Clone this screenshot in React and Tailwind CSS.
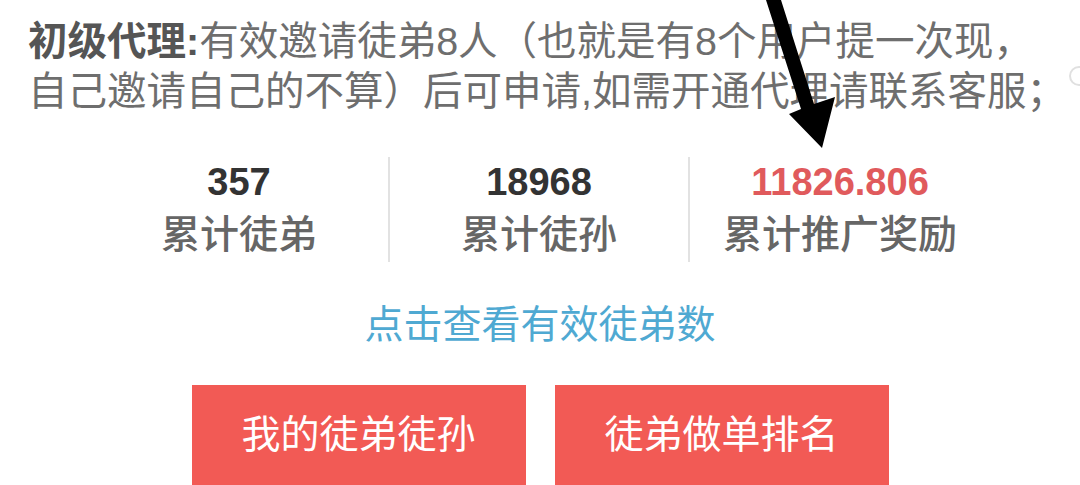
import React from "react"

const font = { fontFamily: '"Liberation Sans", "Noto Sans CJK SC", sans-serif' }

function Stat({ value, label, red, last }) {
  return (
    <div className={`flex w-[300px] flex-col items-center ${last ? "" : "border-r-2 border-[#e2e2e2]"}`}>
      <div className={`h-[50px] text-[38px] leading-[50px] font-bold ${red ? "text-[#e05a5c]" : "text-[#333333]"}`}>
        {value}
      </div>
      <div className="h-[55px] text-[39px] leading-[55px] font-medium text-[#666666]">{label}</div>
    </div>
  )
}

export default function App() {
  return (
    <div className="relative h-[485px] w-[1080px] overflow-hidden bg-white" style={font}>
      {/* intro text */}
      <div className="pl-[28px] pt-[16px] text-[39.5px] leading-[50px] text-[#6e6e6e] whitespace-nowrap">
        <span className="font-bold text-[#555555]">初级代理:</span>有效邀请徒弟8人（也就是有8个用户提一次现，
        <br />
        自己邀请自己的不算）后可申请,如需开通代理请联系客服；
      </div>

      {/* stats */}
      <div className="mt-[41px] flex justify-center">
        <Stat value="357" label="累计徒弟" />
        <Stat value="18968" label="累计徒孙" />
        <Stat value="11826.806" label="累计推广奖励" red last />
      </div>

      <div className="mt-[38px] text-center text-[39px] leading-[50px] text-[#4fa9d2]">点击查看有效徒弟数</div>

      {/* buttons */}
      <div className="mt-[35px] flex justify-center gap-[29px]">
        <button className="flex h-[100px] w-[334px] items-center justify-center bg-[#f25a55] text-[39px] text-white">
          我的徒弟徒孙
        </button>
        <button className="flex h-[100px] w-[334px] items-center justify-center bg-[#f25a55] text-[39px] text-white">
          徒弟做单排名
        </button>
      </div>

      {/* partial circle at right edge */}
      <div className="absolute left-[1069px] top-[66px] h-[20px] w-[20px] rounded-full border-2 border-[#e0e0e0]" />

      {/* annotation arrow */}
      <svg className="absolute left-0 top-0" width="1080" height="485" viewBox="0 0 1080 485">
        <polygon points="766,0 781,0 814,104 835,97 822,148 789,114 801,109" fill="#000" />
      </svg>
    </div>
  )
}
